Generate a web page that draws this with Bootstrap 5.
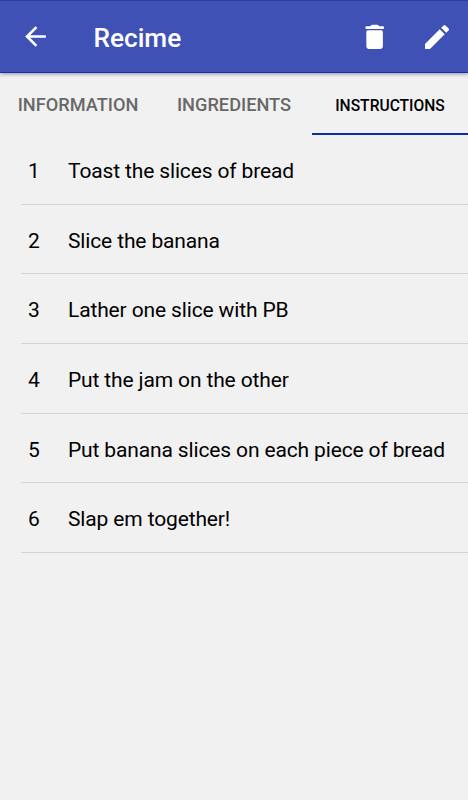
<!DOCTYPE html>
<html lang="en">
<head>
<meta charset="utf-8">
<meta name="viewport" content="width=device-width, initial-scale=1">
<title>Recime</title>
<link href="https://cdn.jsdelivr.net/npm/bootstrap@5.3.0/dist/css/bootstrap.min.css" rel="stylesheet">
<style>
body { font-family: Roboto, "Liberation Sans", sans-serif; background: #f1f1f1; color: #000; height: 800px; overflow: hidden; }
.app-bar { height: 73px; padding: 0 15px 1px 20px; background: #3f51b5; border-top: 1px solid #303f9f; border-bottom: 1px solid #0b35b6; box-shadow: 0 1px 4px rgba(0,0,0,.4); }
.app-bar svg { display: block; fill: #fff; }
.bar-btn { line-height: 1; }
.app-title { font-size: 26.2px; font-weight: 500; line-height: 32px; margin: 3px 0 0 42.5px; color: #fff; }
.bar-actions { gap: 30px; padding-top: 1px; }
.tab-strip { height: 62px; }
.tab-strip .nav-link { height: 62px; padding: 2px 0 0; border-radius: 0; font-size: 18.2px; font-weight: 500; line-height: 24px; color: #686868; width: 156px; }
.tab-strip .nav-link.active { font-size: 15.6px; color: #000; border-bottom: 2px solid #0c2ba5; padding-top: 5px; }
.steps { padding-left: 21px; }
.steps .step { height: 69.7px; padding: 3px 0 0 7px; border: 0; border-bottom: 1px solid #d5d5d5; background: transparent; color: #000; font-size: 21px; letter-spacing: -.14px; line-height: 28px; }
.steps .list-group-flush > .step:last-child { border-bottom-width: 1px; }
.step-no { width: 40px; }
</style>
</head>
<body>
<header class="app-bar d-flex align-items-center position-relative">
  <a class="bar-btn" href="#" aria-label="Back"><svg width="31" height="31" viewBox="0 0 24 24"><path d="M20 11H7.83l5.59-5.59L12 4l-8 8 8 8 1.41-1.41L7.83 13H20z"/></svg></a>
  <h1 class="app-title">Recime</h1>
  <div class="bar-actions d-flex ms-auto">
    <a class="bar-btn" href="#" aria-label="Delete"><svg width="32" height="32" viewBox="0 0 24 24"><path d="M5.500 8.200Q5.500 7 6.700 7h10Q17.900 7 17.900 8.200V19c0 1.100-.9 2-2 2H7.500c-1.100 0-2-.9-2-2zM5.600 4h2.900q.4-1.200 1.400-1.200h3.800q1 0 1.400 1.200H18q.8 0 .8 1t-.8 1H5.600q-.8 0-.8-1t.8-1z"/></svg></a>
    <a class="bar-btn" href="#" aria-label="Edit"><svg width="32" height="32" viewBox="0 0 24 24"><path d="M3 17.250V21h3.750L17.810 9.940l-3.750-3.750zM20.710 7.040a1 1 0 0 0 0-1.410l-2.340-2.340a1 1 0 0 0-1.410 0l-1.830 1.830 3.750 3.750z"/></svg></a>
  </div>
</header>
<nav class="tab-strip nav flex-nowrap">
  <a class="nav-link d-flex align-items-center justify-content-center" href="#"><span>INFORMATION</span></a>
  <a class="nav-link d-flex align-items-center justify-content-center" href="#"><span>INGREDIENTS</span></a>
  <a class="nav-link active d-flex align-items-center justify-content-center" href="#"><span>INSTRUCTIONS</span></a>
</nav>
<main class="steps">
  <div class="list-group list-group-flush">
    <div class="list-group-item step d-flex align-items-center"><span class="step-no">1</span><span>Toast the slices of bread</span></div>
    <div class="list-group-item step d-flex align-items-center"><span class="step-no">2</span><span>Slice the banana</span></div>
    <div class="list-group-item step d-flex align-items-center"><span class="step-no">3</span><span>Lather one slice with PB</span></div>
    <div class="list-group-item step d-flex align-items-center"><span class="step-no">4</span><span>Put the jam on the other</span></div>
    <div class="list-group-item step d-flex align-items-center"><span class="step-no">5</span><span>Put banana slices on each piece of bread</span></div>
    <div class="list-group-item step d-flex align-items-center"><span class="step-no">6</span><span>Slap em together!</span></div>
  </div>
</main>
<script src="https://cdn.jsdelivr.net/npm/bootstrap@5.3.0/dist/js/bootstrap.bundle.min.js"></script>
</body>
</html>
